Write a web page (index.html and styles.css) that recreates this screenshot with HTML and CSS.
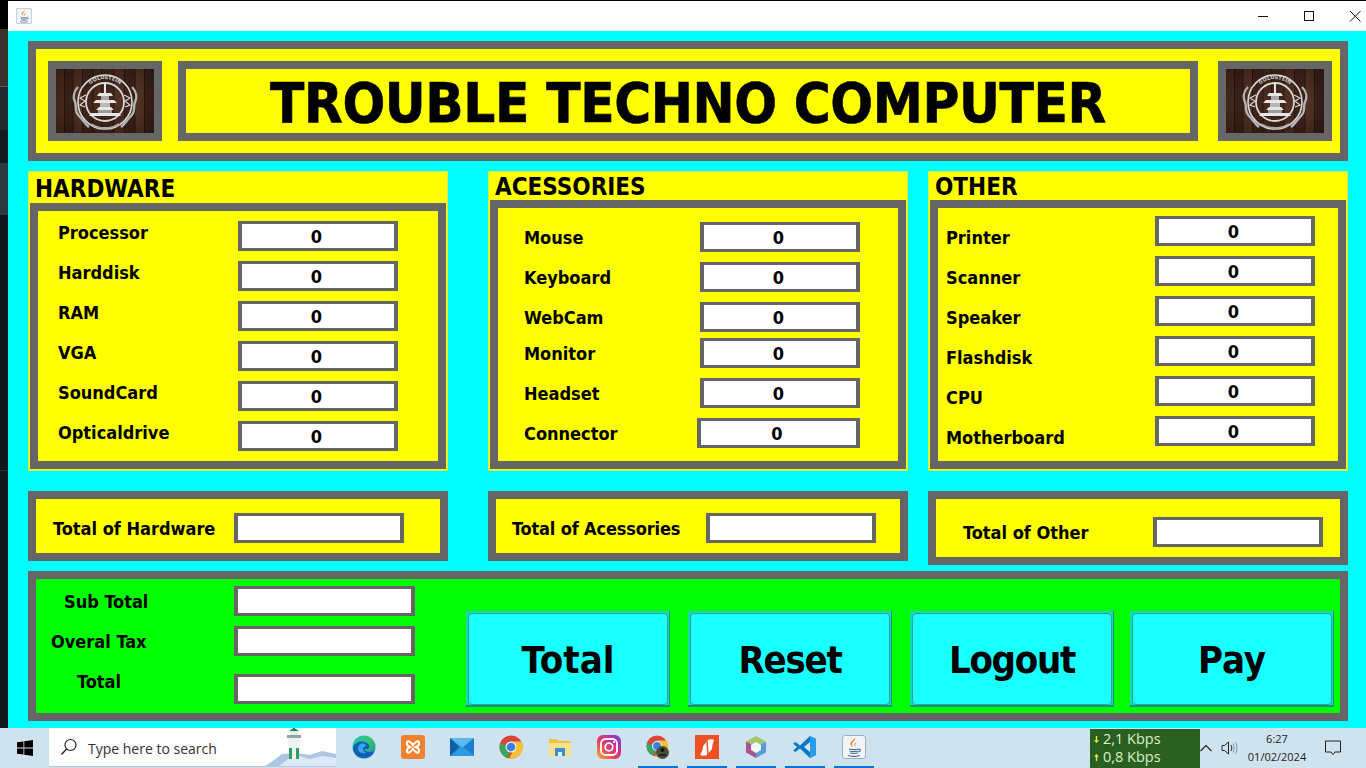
FILE: index.html
```html
<!doctype html>
<html>
<head>
<meta charset="utf-8">
<title>Trouble Techno Computer</title>
<link rel="stylesheet" href="styles.css">
</head>

<body>
<svg class="defs" width="0" height="0">
	<defs>
		<radialGradient id="wood-shade" cx=".5" cy=".5" r=".7">
			<stop offset="0" stop-color="#000" stop-opacity="0"/>
			<stop offset="1" stop-color="#000" stop-opacity=".45"/>
		</radialGradient>
		<path id="arc-top" d="M26 33a23 23 0 0 1 46 0"/>
	</defs>
	<symbol id="emblem" viewBox="0 0 98 64">
		<rect width="98" height="64" fill="#4a2a1f"/>
		<rect x="0" width="8" height="64" fill="#5d3626"/>
		<rect x="17" width="9" height="64" fill="#613a2a"/>
		<rect x="37" width="8" height="64" fill="#512e21"/>
		<rect x="58" width="10" height="64" fill="#5c3526"/>
		<rect x="79" width="9" height="64" fill="#66402c"/>
		<path d="M8.500 0v64M17 0v64M26.500 0v64M37 0v64M45.500 0v64M58 0v64M68.500 0v64M79 0v64M88.500 0v64" stroke="#2a1710" stroke-width=".8"/>
		<rect width="98" height="64" fill="url(#wood-shade)"/>
		<g fill="none" stroke="#d8d8d8">
			<circle cx="49" cy="33" r="27" stroke-width="1.600"/>
			<circle cx="49" cy="33" r="19" stroke-width="1.800"/>
			<path d="M22 18c-5 5-5 11-3 15s-1 9 4 14 6 8 10 11M76 18c5 5 5 11 3 15s1 9-4 14-6 8-10 11" stroke-width="2.400" stroke="#b4b4b4"/>
			<path d="M30 26l-6 3 5 3-5 4 5 2M68 26l6 3-5 3 5 4-5 2" stroke-width="1.200"/>
		</g>
		<path d="M35 55a26 26 0 0 0 28 0" fill="none" stroke="#a8a8a8" stroke-width="2"/>
		<g fill="#e6e6e6">
			<rect x="48" y="15" width="2" height="9"/>
			<path d="M43 24h12l2 3H41zM40 31h18l3 3H37zM43 38h12l3 3H40zM35 44h28l2 3H33z"/>
			<rect x="45" y="27" width="8" height="4" fill="#a8a8a8"/>
			<rect x="44" y="34" width="10" height="4" fill="#b8b8b8"/>
			<rect x="42" y="41" width="14" height="3" fill="#9c9c9c"/>
		</g>
	</symbol>
	<symbol id="java" viewBox="0 0 24 24">
		<rect x=".5" y=".5" width="23" height="23" rx="2.500" fill="#f3f6f8" stroke="#9fb0bd"/>
		<path d="M13 3c1 3-4 4-3 7 .3 1 1 1.500 1.500 2-2-1-3.500-2-3-4 .5-2 4-3 4.500-5zM15 7c-2 1-3 2-2.500 3.500.2.600.6 1 .8 1.500.6-1-.5-1.500 0-2.500.3-.8 1-1.500 1.700-2.500z" fill="#e2761b"/>
		<path d="M7 14c3 .8 7 .8 10 0M7.500 16c2.500.7 6.500.7 9 0M8 18c2.500.6 5.500.6 8 0M6 20.500c3.500 1 8.500 1 12 0M17 14c2 0 2 2.500-.5 3" fill="none" stroke="#4a6f96" stroke-width="1.100"/>
	</symbol>
</svg>

<div class="top-line"></div>
<div class="desktop">
	<div class="backdrop"></div>
	<div class="window">
		<div class="titlebar">
			<svg class="app-icon"><use href="#java"/></svg>
			<div class="win-buttons">
				<svg class="win-btn" viewBox="0 0 46 30"><path d="M18 15.500h10" stroke="#111" fill="none"/></svg>
				<svg class="win-btn" viewBox="0 0 46 30"><rect x="18.500" y="10.500" width="9" height="9" stroke="#111" fill="none"/></svg>
				<svg class="win-btn" viewBox="0 0 46 30"><path d="M18 10l10.500 10.500M28.500 10L18 20.500" stroke="#111" fill="none"/></svg>
			</div>
		</div>

		<div class="content">
			<div class="header">
				<div class="logo"><svg viewBox="0 0 98 64"><use href="#emblem"/><text class="emblem-text"><textPath href="#arc-top" startOffset="50%" text-anchor="middle">GOLDSTEIN</textPath></text></svg></div>
				<div class="title-box"><h1>TROUBLE TECHNO COMPUTER</h1></div>
				<div class="logo"><svg viewBox="0 0 98 64"><use href="#emblem"/><text class="emblem-text"><textPath href="#arc-top" startOffset="50%" text-anchor="middle">GOLDSTEIN</textPath></text></svg></div>
			</div>

			<div class="panels">
				<div class="panel hardware">
					<h2>HARDWARE</h2>
					<div class="group">
						<div class="row"><span class="label">Processor</span><div class="field">0</div></div>
						<div class="row"><span class="label">Harddisk</span><div class="field">0</div></div>
						<div class="row"><span class="label">RAM</span><div class="field">0</div></div>
						<div class="row"><span class="label">VGA</span><div class="field">0</div></div>
						<div class="row"><span class="label">SoundCard</span><div class="field">0</div></div>
						<div class="row"><span class="label">Opticaldrive</span><div class="field">0</div></div>
					</div>
				</div>
				<div class="panel acessories">
					<h2>ACESSORIES</h2>
					<div class="group">
						<div class="row"><span class="label">Mouse</span><div class="field">0</div></div>
						<div class="row"><span class="label">Keyboard</span><div class="field">0</div></div>
						<div class="row"><span class="label">WebCam</span><div class="field">0</div></div>
						<div class="row row-tight"><span class="label">Monitor</span><div class="field">0</div></div>
						<div class="row"><span class="label">Headset</span><div class="field">0</div></div>
						<div class="row"><span class="label">Connector</span><div class="field field-wide">0</div></div>
					</div>
				</div>
				<div class="panel other">
					<h2>OTHER</h2>
					<div class="group">
						<div class="row"><span class="label">Printer</span><div class="field">0</div></div>
						<div class="row"><span class="label">Scanner</span><div class="field">0</div></div>
						<div class="row"><span class="label">Speaker</span><div class="field">0</div></div>
						<div class="row"><span class="label">Flashdisk</span><div class="field">0</div></div>
						<div class="row"><span class="label">CPU</span><div class="field">0</div></div>
						<div class="row"><span class="label">Motherboard</span><div class="field">0</div></div>
					</div>
				</div>
			</div>

			<div class="totals">
				<div class="total-box total-hw"><span class="label">Total of Hardware</span><div class="field"></div></div>
				<div class="total-box total-acc"><span class="label">Total of Acessories</span><div class="field"></div></div>
				<div class="total-box total-oth"><span class="label">Total of Other</span><div class="field"></div></div>
			</div>

			<div class="bottom">
				<div class="sums">
					<div class="sum-row"><span class="label sum-sub">Sub Total</span><div class="field"></div></div>
					<div class="sum-row"><span class="label sum-tax">Overal Tax</span><div class="field"></div></div>
					<div class="sum-row sum-last"><span class="label sum-total">Total</span><div class="field"></div></div>
				</div>
				<div class="actions">
					<div class="btn"><span>Total</span></div>
					<div class="btn btn-tight"><span>Reset</span></div>
					<div class="btn btn-tight"><span>Logout</span></div>
					<div class="btn btn-last"><span>Pay</span></div>
				</div>
			</div>
		</div>
	</div>
</div>

<div class="taskbar">
	<div class="start">
		<svg width="16" height="16" viewBox="0 0 16 16"><path d="M0 2.300l6.500-.9v6.200H0zM7.300 1.300L16 0v7.600H7.300zM0 8.400h6.500v6.200L0 13.700zM7.300 8.400H16V16l-8.700-1.300z" fill="#000"/></svg>
	</div>
	<div class="search">
		<svg class="search-glass" width="18" height="18" viewBox="0 0 18 18"><circle cx="10.500" cy="7" r="5.500" fill="none" stroke="#222" stroke-width="1.200"/><path d="M6.500 11L1.500 16.500" stroke="#222" stroke-width="1.400"/></svg>
		<span class="search-text">Type here to search</span>
		<svg class="search-art" width="72" height="40" viewBox="0 0 72 40">
			<path d="M0 40l10-7 8-6 14-1 14 2 12-4 14 3v13z" fill="#aac6e2"/>
			<path d="M14 40l10-8 12-3 10 3 12-3 14 2v9z" fill="#dce8f5"/>
			<rect x="24" y="10" width="12" height="11" fill="#eef2f1"/>
			<rect x="25" y="21" width="10" height="11" fill="#2f9e62"/>
			<rect x="28" y="21" width="4" height="11" fill="#eef2f1"/>
			<rect x="23" y="8" width="14" height="3" fill="#8fa8a0"/>
			<rect x="26" y="4" width="8" height="4" fill="#e6eeea"/>
			<path d="M25 4l5-3 5 3z" fill="#1f7f56"/>
			<rect x="29" y="0" width="2" height="2" fill="#1f7f56"/>
		</svg>
	</div>
	<div class="task-icons">
		<div class="task-item"><svg viewBox="0 0 24 24"><defs><linearGradient id="edge" x1="0" y1="0" x2="1" y2="1"><stop offset="0" stop-color="#1fc3c0"/><stop offset=".5" stop-color="#37c46c"/><stop offset="1" stop-color="#1b7fd4"/></linearGradient></defs><circle cx="12" cy="12" r="11.500" fill="url(#edge)"/><path d="M1 13C2 6 13 4 17 10c1 2 0 4-3 4h-2c1 3 6 4 10 2-1 4-5 7-10 7-7 0-11-5-11-10z" fill="#0f5fb8"/><path d="M6 14c0-4 4-7 7-5 1 1 1 3-1 3-2 1-1 4 2 6-4 1-8-1-8-4z" fill="#3aa8e6"/></svg></div>
		<div class="task-item"><svg viewBox="0 0 24 24"><rect width="24" height="24" rx="3" fill="#f2802e"/><path d="M8 6.500c-3-1-3 4 1 5.500-4 1.500-4 6.500-1 5.500 2-.7 3-2.500 4-3.500 1 1 2 2.800 4 3.500 3 1 3-4-1-5.500 4-1.500 4-6.500 1-5.500-2 .7-3 2.500-4 3.500-1-1-2-2.800-4-3.500z" fill="none" stroke="#fff" stroke-width="2"/></svg></div>
		<div class="task-item"><svg viewBox="0 0 24 24"><rect x="0" y="3" width="24" height="18" fill="#1a7fd0"/><path d="M0 3l12 10L24 3z" fill="#5cb8ee"/><path d="M0 21l12-10 12 10z" fill="#2c9be6"/><path d="M0 3v18l9-9z" fill="#0f5fa8"/></svg></div>
		<div class="task-item"><svg viewBox="0 0 24 24"><circle cx="12" cy="12" r="11.500" fill="#db4437"/><path d="M12 12L1.500 8A11.500 11.500 0 0 0 9 23.200z" fill="#3ba55c"/><path d="M12 6.500h10.200A11.500 11.500 0 0 1 10 23.400l5-9z" fill="#fbc02d"/><circle cx="12" cy="12" r="5.500" fill="#e8f0f8"/><circle cx="12" cy="12" r="4.300" fill="#3f7fe0"/></svg></div>
		<div class="task-item"><svg viewBox="0 0 24 24"><path d="M1 4h8l2 2h12v15H1z" fill="#f2c04c"/><rect x="1" y="8" width="22" height="13" fill="#fbe08a"/><rect x="7" y="13" width="10" height="8" fill="#3d8fd0"/><rect x="10" y="17" width="4" height="4" fill="#e9f1f6"/></svg></div>
		<div class="task-item"><svg viewBox="0 0 24 24"><defs><linearGradient id="insta" x1="0" y1="1" x2="1" y2="0"><stop offset="0" stop-color="#f9b233"/><stop offset=".4" stop-color="#e6405f"/><stop offset=".75" stop-color="#b62fa8"/><stop offset="1" stop-color="#5b52d6"/></linearGradient></defs><rect width="24" height="24" rx="6" fill="url(#insta)"/><rect x="4" y="4" width="16" height="16" rx="4.500" fill="none" stroke="#fff" stroke-width="1.800"/><circle cx="12" cy="12" r="3.800" fill="none" stroke="#fff" stroke-width="1.800"/><circle cx="17" cy="7" r="1.100" fill="#fff"/></svg></div>
		<div class="task-item open"><svg viewBox="0 0 24 24"><circle cx="11" cy="11" r="10.500" fill="#db4437"/><path d="M11 11L1 8A10.500 10.500 0 0 0 8 21z" fill="#3ba55c"/><path d="M11 5.500h9.500A10.500 10.500 0 0 1 9 21.500l5-9z" fill="#fbc02d"/><circle cx="11" cy="11" r="5" fill="#e8f0f8"/><circle cx="11" cy="11" r="3.900" fill="#3f7fe0"/><circle cx="16.500" cy="17.500" r="6.500" fill="#4a4f3a"/><circle cx="16.500" cy="15" r="2" fill="#111"/><path d="M12 21c1-3 8-3 9 0z" fill="#222"/></svg></div>
		<div class="task-item open"><svg viewBox="0 0 24 24"><rect width="24" height="24" fill="#f04e23"/><path d="M5 20c2-3 3-6 3-9l5-6c2-1 5-1 6 0-1 3-2 6-2 9l-5 6c-2 1-5 1-7 0z" fill="#fff"/><path d="M12 6l1 14" stroke="#f04e23" stroke-width="1.500"/></svg></div>
		<div class="task-item open"><svg viewBox="0 0 24 24"><path d="M12 1l10 5.500L12 12 2 6.500z" fill="#a3c76a"/><path d="M22 6.500v11L12 23V12z" fill="#5b9bd8"/><path d="M2 6.500v11L12 23V12z" fill="#a8558e"/><path d="M12 7l5 3v5l-5 3-5-3v-5z" fill="#f4f6f4"/></svg></div>
		<div class="task-item open"><svg viewBox="0 0 24 24"><path d="M17 1l6 3v16l-6 3L7 13.500 2.500 17 0 15.500 4 12 0 8.500 2.500 7 7 10.500z" fill="#0a78c8"/><path d="M17 7l-6 5 6 5z" fill="#d3e5f1"/><path d="M17 1l6 3v16l-6 3z" fill="#2a9be6"/></svg></div>
		<div class="task-item open"><svg viewBox="0 0 24 24"><use href="#java"/></svg></div>
	</div>

	<div class="tray">
		<div class="netmeter">
			<div class="net-line"><svg class="net-arrow" viewBox="0 0 7 10"><path d="M2.500 0h2v6H7L3.500 10 0 6h2.500z"/></svg>2,1 Kbps</div>
			<div class="net-line"><svg class="net-arrow" viewBox="0 0 7 10"><path d="M2.500 10h2V4H7L3.500 0 0 4h2.500z"/></svg>0,8 Kbps</div>
		</div>
		<svg class="tray-chevron" width="12" height="8" viewBox="0 0 12 8"><path d="M.5 7L6 1.500 11.500 7" fill="none" stroke="#222" stroke-width="1.100"/></svg>
		<svg class="tray-sound" width="17" height="16" viewBox="0 0 17 16"><path d="M1 5.500h2.500L7.500 2v12L3.500 10.500H1z" fill="none" stroke="#222"/><path d="M10 5c1 2 1 4 0 6" fill="none" stroke="#222"/><path d="M12 3.500c1.500 3 1.500 6 0 9M14.500 2c2 4 2 8 0 12" fill="none" stroke="#8a979f"/></svg>
		<div class="clock"><div>6:27</div><div>01/02/2024</div></div>
		<svg class="tray-note" width="16" height="16" viewBox="0 0 16 16"><path d="M.5 1h15v11H10l-2 2.500L6 12H.5z" fill="none" stroke="#222"/></svg>
	</div>
</div>
</body>
</html>
```

FILE: styles.css
```css
*{margin:0; padding:0; box-sizing:border-box;}
html,body{width:1366px; height:768px; overflow:hidden; background:#000;}
body{font-family:"DejaVu Sans", sans-serif; color:#000;}
.defs{display:block; height:0;}
.emblem-text{font-size:5px; font-weight:bold; fill:#d0d0d0;}

.top-line{height:1px; background:#000;}
.desktop{display:flex; height:727px;}
.backdrop{width:8px; background:linear-gradient(#000 0, #000 28px, #38322e 28px, #38322e 85px, #5a5a5a 85px, #5a5a5a 86px, #20292e 86px, #20292e 129px, #101a1f 129px, #101a1f 162px, #2a3a40 162px, #2a3a40 214px, #10181e 214px, #10181e 469px, #2a3036 469px, #2a3036 470px, #11181e 470px);}
.window{flex:1; background:#0ff; display:flex; flex-direction:column;}

.titlebar{height:30px; background:#fff; display:flex; align-items:center; justify-content:space-between; padding-left:8px;}
.app-icon{width:16px; height:16px;}
.win-buttons{display:flex; margin-right:-12px;}
.win-btn{width:46px; height:30px;}

.content{padding:10px 18px 0 20px;}
.header{height:120px; border:8px solid #666; background:#ff0; padding:12px 8px 12px 12px; display:flex;}
.logo{width:114px; height:80px; border:8px solid #666; flex:none;}
.logo svg{display:block; width:98px; height:64px;}
.title-box{width:1020px; margin:0 20px 0 16px; border:8px solid #666; display:flex; align-items:center; justify-content:center;}
h1{font-size:56px; font-weight:bold; font-stretch:condensed; line-height:64px; letter-spacing:-.4px; padding-top:4px; -webkit-text-stroke:.6px #000;}

.panels{display:flex; margin-top:10px;}
.panel{width:420px; height:300px; background:#ff0; border:1px solid #cdf04e; padding:0 1px 1px; display:flex; flex-direction:column;}
.acessories{margin:0 20px 0 40px;}
.panel h2{height:28px; font-size:24px; font-weight:bold; font-stretch:condensed; line-height:30px; padding-left:5px; flex:none;}
.hardware h2{height:31px; line-height:34px;}
.group{border:8px solid #666; display:flex; flex-direction:column; gap:10px; padding-top:10px;}
.hardware .group{height:266px;}
.acessories .group, .other .group{height:269px;}
.acessories .group{padding-top:14px;}
.other .group{padding-top:8px;}

.row{display:flex; align-items:center; height:30px;}
.row-tight{margin-top:-4px;}
.label{font-size:18px; font-weight:bold; font-stretch:condensed; white-space:nowrap;}
.row .label{flex:none;}
.hardware .label{width:200px; padding-left:20px; margin-bottom:8px;}
.acessories .label{width:202px; padding-left:26px;}
.other .label{width:217px; padding-left:8px; margin-top:12px;}

.field{width:160px; height:30px; background:#fff; border:solid #666; border-width:3px 4px; font-size:18px; font-weight:bold; font-stretch:condensed; line-height:26px; text-align:center; padding-right:3px; flex:none;}
.field-wide{width:163px; margin-left:-3px;}

.totals{display:flex; align-items:flex-start; height:74px; margin-top:20px;}
.total-box{width:420px; height:70px; border:8px solid #666; background:#ff0; display:flex; align-items:center; padding-top:4px;}
.total-box .field{width:170px;}
.total-box .label{flex:none;}
.total-hw .label{width:198px; padding-left:17px;}
.total-acc{margin:0 20px 0 40px;}
.total-acc .label{width:210px; padding-left:16px; letter-spacing:-.15px;}
.total-oth{height:74px; padding-top:8px;}
.total-oth .label{width:217px; padding-left:27px;}

.bottom{height:150px; margin-top:6px; border:8px solid #666; background:#0f0; display:flex;}
.sums{width:379px; padding-top:7px; display:flex; flex-direction:column; gap:10px; flex:none;}
.sum-row{display:flex; height:30px; align-items:center;}
.sum-row .label{width:198px; flex:none;}
.sum-row .field{width:181px;}
.sum-last{align-items:flex-start;}
.sum-last .label{align-self:center;}
.sum-last .field{margin-top:8px;}
.sum-sub{padding-left:28px;}
.sum-tax{padding-left:15px;}
.sum-total{padding-left:41px;}

.actions{display:flex; gap:18px; margin:32px 0 0 51px;}
.btn{width:204px; height:96px; padding:2px 1px 0 2px; background:#1cd8ae; border-bottom:2px solid #17907f; border-right:1px solid #17907f;}
.btn span{display:flex; align-items:center; justify-content:center; width:100%; height:100%; padding-top:2px; background:#1affff; border:1px solid #2aa3a0; border-radius:4px; font-size:38px; font-weight:bold; font-stretch:condensed;}
.btn-tight span{letter-spacing:-1.3px;}
.btn-last{margin-left:-2px;}

.taskbar{height:40px; background:#cfe3ef; display:flex; font-family:"Open Sans", sans-serif; color:#222;}
.start{width:49px; display:flex; align-items:center; justify-content:center; flex:none;}
.search{width:287px; height:39px; background:#fff; display:flex; align-items:center; flex:none; overflow:hidden; border-bottom:1px solid #b9c7d0;}
.search-glass{margin-left:11px; flex:none;}
.search-text{margin-left:10px; padding-top:2px; font-size:14px; color:#333; white-space:nowrap; width:128px; flex:none;}
.search-art{margin-left:auto; flex:none;}
.task-icons{display:flex; margin-left:3px;}
.task-item{width:49px; height:40px; display:flex; align-items:center; justify-content:center; padding-bottom:2px;}
.task-item svg{width:24px; height:24px;}
.open{background:linear-gradient(#0078d7,#0078d7) center bottom / 40px 2px no-repeat;}

.tray{display:flex; align-items:center; margin-left:auto;}
.netmeter{width:110px; height:39px; margin-top:1px; background:#2a5f22; color:#dcefc8; font-size:14.500px; line-height:18px; padding:1px 0 0 4px;}
.net-line{display:flex; align-items:center; gap:4px; white-space:nowrap;}
.net-arrow{width:5px; height:9px; fill:#f4e83c; flex:none;}
.tray-chevron{flex:none;}
.tray-sound{margin-left:9px; flex:none;}
.clock{width:70px; margin-left:4px; text-align:center; font-size:11px; line-height:18px; flex:none;}
.tray-note{margin:0 25px 0 13px; flex:none;}
```
